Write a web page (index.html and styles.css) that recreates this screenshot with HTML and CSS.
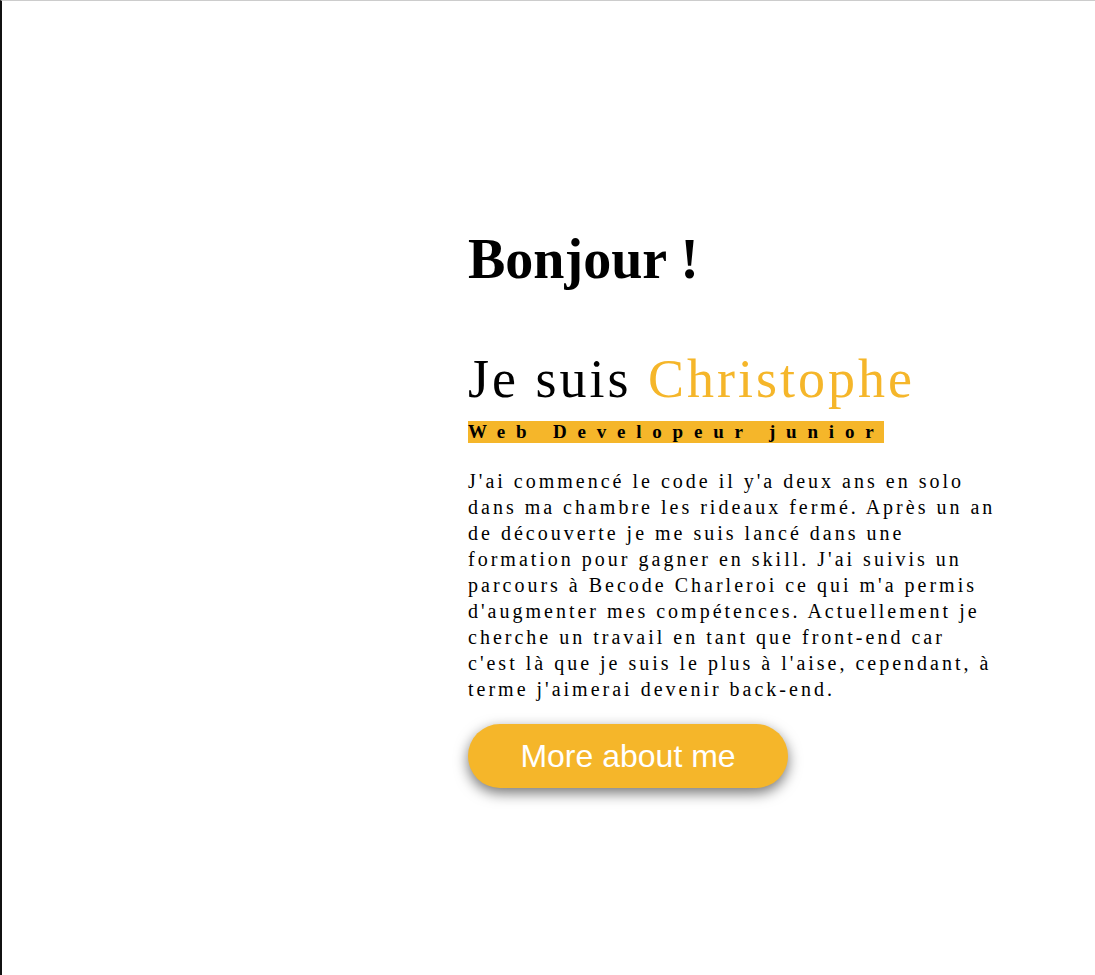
FILE: index.html
```html
<!DOCTYPE html>
<html lang="fr">
<head>
<meta charset="utf-8">
<title>Christophe</title>
<link rel="stylesheet" href="styles.css">
</head>
<body>
<main class="page">
  <section class="intro">
    <h1 class="hello">Bonjour !</h1>
    <h2 class="name">Je suis <span class="accent">Christophe</span></h2>
    <p class="tag"><span class="tag-text">Web Developeur junior</span></p>
    <p class="about">J'ai commencé le code il y'a deux ans en solo dans ma chambre les rideaux fermé. Après un an de découverte je me suis lancé dans une formation pour gagner en skill. J'ai suivis un parcours à Becode Charleroi ce qui m'a permis d'augmenter mes compétences. Actuellement je cherche un travail en tant que front-end car c'est là que je suis le plus à l'aise, cependant, à terme j'aimerai devenir back-end.</p>
    <button class="more" type="button">More about me</button>
  </section>
</main>
</body>
</html>
```
FILE: styles.css
```css
html, body {
  margin: 0;
  padding: 0;
  background: #fff;
}

.page {
  box-sizing: border-box;
  min-height: 975px;
  border-top: 1px solid #cccccc;
  border-left: 2px solid #111111;
  display: flex;
  padding: 226px 0 0 466px;
  font-family: "Liberation Serif", "Times New Roman", serif;
  color: #000;
}

.intro {
  width: 532px;
  display: flex;
  flex-direction: column;
  align-items: flex-start;
}

.hello {
  margin: 0;
  font-size: 56px;
  line-height: 64px;
  font-weight: bold;
}

.name {
  margin: 57px 0 0;
  font-size: 54px;
  line-height: 62px;
  font-weight: normal;
  letter-spacing: 3px;
}

.accent {
  color: #f5b62a;
}

.tag {
  margin: 11px 0 0;
}

.tag-text {
  display: inline-block;
  background: #f5b62a;
  font-size: 19px;
  line-height: 22px;
  font-weight: bold;
  letter-spacing: 10.8px;
}

.about {
  margin: 25px 0 0;
  font-size: 20px;
  line-height: 26px;
  letter-spacing: 3px;
}

.more {
  margin-top: 22px;
  width: 320px;
  height: 64px;
  border: none;
  border-radius: 32px;
  background: #f5b62a;
  color: #fff;
  font-family: "Liberation Sans", Arial, sans-serif;
  font-size: 32px;
  box-shadow: 0 5px 14px rgba(0, 0, 0, 0.55);
  padding: 0;
  cursor: pointer;
}
```
